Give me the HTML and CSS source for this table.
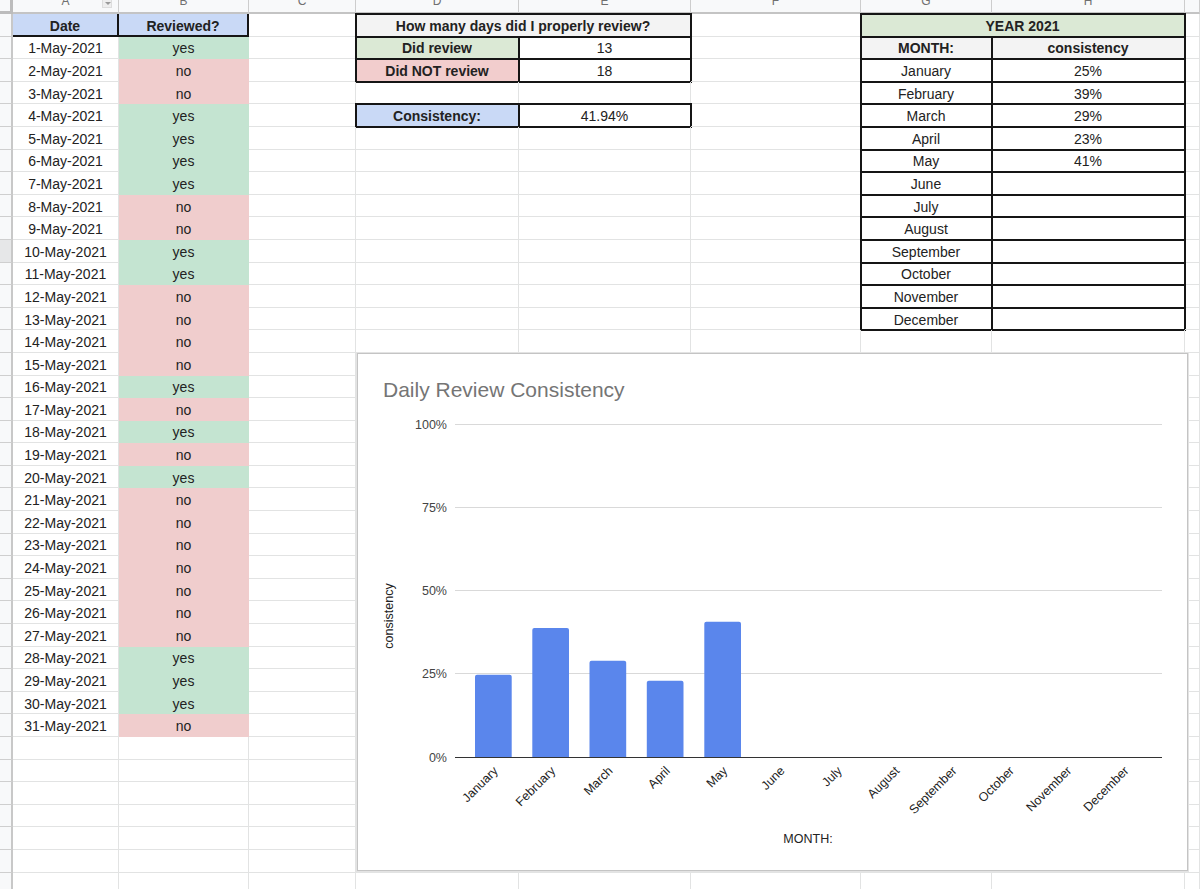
FILE: index.html
```html
<!DOCTYPE html>
<html lang="en">
<head>
<meta charset="utf-8">
<title>Daily Review Consistency</title>
<link rel="stylesheet" href="styles.css">
</head>
<body>
<div class="page">
  <div class="sheet">
    <!-- column headers -->
    <div class="corner"></div>
    <div class="ch has-filter"><span>A</span><i class="filter"></i></div>
    <div class="ch"><span>B</span></div>
    <div class="ch"><span>C</span></div>
    <div class="ch"><span>D</span></div>
    <div class="ch"><span>E</span></div>
    <div class="ch"><span>F</span></div>
    <div class="ch"><span>G</span></div>
    <div class="ch"><span>H</span></div>
    <div class="ch"></div>

    <!-- row 1 -->
    <div class="rh"></div><div class="hd">Date</div><div class="hd">Reviewed?</div><div></div>
    <div class="bx b gr sp2">How many days did I properly review?</div><div></div>
    <div class="bx b lg sp2">YEAR 2021</div><div></div>
    <!-- row 2 -->
    <div class="rh"></div><div>1-May-2021</div><div class="y">yes</div><div></div>
    <div class="bx b lg">Did review</div><div class="bx">13</div><div></div>
    <div class="bx b gr">MONTH:</div><div class="bx b gr">consistency</div><div></div>
    <!-- row 3 -->
    <div class="rh"></div><div>2-May-2021</div><div class="n">no</div><div></div>
    <div class="bx b pk">Did NOT review</div><div class="bx">18</div><div></div>
    <div class="bx">January</div><div class="bx">25%</div><div></div>
    <!-- row 4 -->
    <div class="rh"></div><div>3-May-2021</div><div class="n">no</div><div></div>
    <div></div><div></div><div></div>
    <div class="bx">February</div><div class="bx">39%</div><div></div>
    <!-- row 5 -->
    <div class="rh"></div><div>4-May-2021</div><div class="y">yes</div><div></div>
    <div class="bx b bl">Consistency:</div><div class="bx">41.94%</div><div></div>
    <div class="bx">March</div><div class="bx">29%</div><div></div>
    <!-- row 6 -->
    <div class="rh"></div><div>5-May-2021</div><div class="y">yes</div><div></div><div></div><div></div><div></div>
    <div class="bx">April</div><div class="bx">23%</div><div></div>
    <!-- row 7 -->
    <div class="rh"></div><div>6-May-2021</div><div class="y">yes</div><div></div><div></div><div></div><div></div>
    <div class="bx">May</div><div class="bx">41%</div><div></div>
    <!-- row 8 -->
    <div class="rh"></div><div>7-May-2021</div><div class="y">yes</div><div></div><div></div><div></div><div></div>
    <div class="bx">June</div><div class="bx"></div><div></div>
    <!-- row 9 -->
    <div class="rh"></div><div>8-May-2021</div><div class="n">no</div><div></div><div></div><div></div><div></div>
    <div class="bx">July</div><div class="bx"></div><div></div>
    <!-- row 10 -->
    <div class="rh"></div><div>9-May-2021</div><div class="n">no</div><div></div><div></div><div></div><div></div>
    <div class="bx">August</div><div class="bx"></div><div></div>
    <!-- row 11 -->
    <div class="rh sel"></div><div>10-May-2021</div><div class="y">yes</div><div></div><div></div><div></div><div></div>
    <div class="bx">September</div><div class="bx"></div><div></div>
    <!-- row 12 -->
    <div class="rh"></div><div>11-May-2021</div><div class="y">yes</div><div></div><div></div><div></div><div></div>
    <div class="bx">October</div><div class="bx"></div><div></div>
    <!-- row 13 -->
    <div class="rh"></div><div>12-May-2021</div><div class="n">no</div><div></div><div></div><div></div><div></div>
    <div class="bx">November</div><div class="bx"></div><div></div>
    <!-- row 14 -->
    <div class="rh"></div><div>13-May-2021</div><div class="n">no</div><div></div><div></div><div></div><div></div>
    <div class="bx">December</div><div class="bx"></div><div></div>
    <!-- rows 15-32 -->
    <div class="rh"></div><div>14-May-2021</div><div class="n">no</div><div></div><div></div><div></div><div></div><div></div><div></div><div></div>
    <div class="rh"></div><div>15-May-2021</div><div class="n">no</div><div></div><div></div><div></div><div></div><div></div><div></div><div></div>
    <div class="rh"></div><div>16-May-2021</div><div class="y">yes</div><div></div><div></div><div></div><div></div><div></div><div></div><div></div>
    <div class="rh"></div><div>17-May-2021</div><div class="n">no</div><div></div><div></div><div></div><div></div><div></div><div></div><div></div>
    <div class="rh"></div><div>18-May-2021</div><div class="y">yes</div><div></div><div></div><div></div><div></div><div></div><div></div><div></div>
    <div class="rh"></div><div>19-May-2021</div><div class="n">no</div><div></div><div></div><div></div><div></div><div></div><div></div><div></div>
    <div class="rh"></div><div>20-May-2021</div><div class="y">yes</div><div></div><div></div><div></div><div></div><div></div><div></div><div></div>
    <div class="rh"></div><div>21-May-2021</div><div class="n">no</div><div></div><div></div><div></div><div></div><div></div><div></div><div></div>
    <div class="rh"></div><div>22-May-2021</div><div class="n">no</div><div></div><div></div><div></div><div></div><div></div><div></div><div></div>
    <div class="rh"></div><div>23-May-2021</div><div class="n">no</div><div></div><div></div><div></div><div></div><div></div><div></div><div></div>
    <div class="rh"></div><div>24-May-2021</div><div class="n">no</div><div></div><div></div><div></div><div></div><div></div><div></div><div></div>
    <div class="rh"></div><div>25-May-2021</div><div class="n">no</div><div></div><div></div><div></div><div></div><div></div><div></div><div></div>
    <div class="rh"></div><div>26-May-2021</div><div class="n">no</div><div></div><div></div><div></div><div></div><div></div><div></div><div></div>
    <div class="rh"></div><div>27-May-2021</div><div class="n">no</div><div></div><div></div><div></div><div></div><div></div><div></div><div></div>
    <div class="rh"></div><div>28-May-2021</div><div class="y">yes</div><div></div><div></div><div></div><div></div><div></div><div></div><div></div>
    <div class="rh"></div><div>29-May-2021</div><div class="y">yes</div><div></div><div></div><div></div><div></div><div></div><div></div><div></div>
    <div class="rh"></div><div>30-May-2021</div><div class="y">yes</div><div></div><div></div><div></div><div></div><div></div><div></div><div></div>
    <div class="rh"></div><div>31-May-2021</div><div class="n">no</div><div></div><div></div><div></div><div></div><div></div><div></div><div></div>
    <!-- rows 33-39 -->
    <div class="rh"></div><div></div><div></div><div></div><div></div><div></div><div></div><div></div><div></div><div></div>
    <div class="rh"></div><div></div><div></div><div></div><div></div><div></div><div></div><div></div><div></div><div></div>
    <div class="rh"></div><div></div><div></div><div></div><div></div><div></div><div></div><div></div><div></div><div></div>
    <div class="rh"></div><div></div><div></div><div></div><div></div><div></div><div></div><div></div><div></div><div></div>
    <div class="rh"></div><div></div><div></div><div></div><div></div><div></div><div></div><div></div><div></div><div></div>
    <div class="rh"></div><div></div><div></div><div></div><div></div><div></div><div></div><div></div><div></div><div></div>
    <div class="rh"></div><div></div><div></div><div></div><div></div><div></div><div></div><div></div><div></div><div></div>
  </div>

  <div class="chart">
    <svg class="chart-svg" width="829" height="516" viewBox="0 0 829 516" xmlns="http://www.w3.org/2000/svg">
      <text class="title" x="25" y="42.5">Daily Review Consistency</text>

      <g class="grid">
        <line x1="97" y1="70.5" x2="804" y2="70.5"/>
        <line x1="97" y1="153.5" x2="804" y2="153.5"/>
        <line x1="97" y1="236.5" x2="804" y2="236.5"/>
        <line x1="97" y1="319.5" x2="804" y2="319.5"/>
      </g>

      <g class="ylab">
        <text x="89" y="75">100%</text>
        <text x="89" y="158">75%</text>
        <text x="89" y="241">50%</text>
        <text x="89" y="324">25%</text>
        <text x="89" y="407.5">0%</text>
      </g>

      <text class="axis-title" x="35" y="262" transform="rotate(-90 35 262)">consistency</text>

      <g class="bars">
        <path d="M117 403 V322.7 Q117 320.7 119 320.7 H151.7 Q153.7 320.7 153.7 322.7 V403 Z"/>
        <path d="M174.3 403 V276 Q174.3 274 176.3 274 H209 Q211 274 211 276 V403 Z"/>
        <path d="M231.5 403 V308.7 Q231.5 306.7 233.5 306.7 H266.2 Q268.2 306.7 268.2 308.7 V403 Z"/>
        <path d="M288.8 403 V328.7 Q288.8 326.7 290.8 326.7 H323.5 Q325.5 326.7 325.5 328.7 V403 Z"/>
        <path d="M346.3 403 V269.7 Q346.3 267.7 348.3 267.7 H381 Q383 267.7 383 269.7 V403 Z"/>
      </g>

      <line class="base" x1="97" y1="403.5" x2="804" y2="403.5"/>

      <g class="xlab">
        <text x="140.8" y="417.5" transform="rotate(-45 140.8 417.5)">January</text>
        <text x="198.1" y="417.5" transform="rotate(-45 198.1 417.5)">February</text>
        <text x="255.5" y="417.5" transform="rotate(-45 255.5 417.5)">March</text>
        <text x="312.8" y="417.5" transform="rotate(-45 312.8 417.5)">April</text>
        <text x="370.1" y="417.5" transform="rotate(-45 370.1 417.5)">May</text>
        <text x="427.4" y="417.5" transform="rotate(-45 427.4 417.5)">June</text>
        <text x="484.8" y="417.5" transform="rotate(-45 484.8 417.5)">July</text>
        <text x="542.1" y="417.5" transform="rotate(-45 542.1 417.5)">August</text>
        <text x="599.4" y="417.5" transform="rotate(-45 599.4 417.5)">September</text>
        <text x="656.8" y="417.5" transform="rotate(-45 656.8 417.5)">October</text>
        <text x="714.1" y="417.5" transform="rotate(-45 714.1 417.5)">November</text>
        <text x="771.4" y="417.5" transform="rotate(-45 771.4 417.5)">December</text>
      </g>

      <text class="axis-title mid" x="450" y="489">MONTH:</text>
    </svg>
  </div>
</div>
</body>
</html>
```

FILE: styles.css
```css
html, body {
  margin: 0;
  padding: 0;
  background: #ffffff;
}

body {
  overflow: hidden;
  font-family: "Liberation Sans", Arial, sans-serif;
}

.page {
  position: relative;
  width: 1200px;
  height: 889px;
  overflow: hidden;
}

/* ---------- spreadsheet grid ---------- */
.sheet {
  display: grid;
  grid-template-columns: 13px 106px 130px 107px 163px 172px 170px 131px 193px 15px;
  grid-template-rows: 14px;
  grid-auto-rows: 22.6px;
  font-size: 14px;
  color: #222222;
}

.sheet > div {
  box-sizing: border-box;
  border-right: 1px solid #e2e3e3;
  border-bottom: 1px solid #e2e3e3;
  padding-top: 2px;
  display: flex;
  align-items: center;
  justify-content: center;
  white-space: nowrap;
  min-width: 0;
}

/* header row / header column */
.sheet > .corner {
  background: #f8f9fa;
  border-right: 3px solid #bcbcbc;
  border-bottom: 3px solid #bcbcbc;
  padding-top: 0;
}

.sheet > .ch {
  background: #f8f9fa;
  border-right: 1px solid #cdcdcd;
  border-bottom: 2px solid #c4c4c4;
  padding-top: 0;
  align-items: flex-start;
  color: #707070;
  font-size: 12px;
}

.ch span {
  display: block;
  line-height: 12px;
  margin-top: -5px;
}

.has-filter {
  position: relative;
}

.filter {
  position: absolute;
  right: 6px;
  top: 0;
  width: 10px;
  height: 8px;
  background: #eeeeee;
  border: 1px solid #dddddd;
  border-top: 0;
  box-sizing: border-box;
}

.filter::after {
  content: "";
  position: absolute;
  left: 1.5px;
  top: 1.5px;
  border-left: 3px solid transparent;
  border-right: 3px solid transparent;
  border-top: 3.5px solid #9a9a9a;
}

.sheet > .rh {
  background: #f8f9fa;
  border-right: 2px solid #c8c8c8;
  border-bottom: 1px solid #cfcfcf;
  padding-top: 0;
}

.sheet > .rh.sel {
  background: #e6e7e8;
}

/* data column header */
.sheet > .hd {
  background: #c9d9f6;
  font-weight: bold;
  border-right: 2px solid #151515;
  border-bottom: 2px solid #151515;
  padding-top: 4px;
}

/* conditional yes / no */
.sheet > .y {
  background: #c4e4d1;
  border-color: #c4e4d1;
}

.sheet > .n {
  background: #f0cdcd;
  border-color: #f0cdcd;
}

/* boxed summary cells */
.sheet > .bx {
  outline: 2px solid #151515;
  outline-offset: -1px;
}

.b { font-weight: bold; }
.sheet > .gr { background: #f3f3f3; }
.sheet > .lg { background: #dbe9d5; }
.sheet > .pk { background: #f2cdcd; }
.sheet > .bl { background: #c9d9f6; }
.sp2 { grid-column: span 2; }

/* ---------- chart overlay ---------- */
.chart {
  position: absolute;
  left: 357px;
  top: 353px;
  width: 831px;
  height: 518px;
  box-sizing: border-box;
  border: 1px solid #c4c4c4;
  box-shadow: 0 0 0 1px #e3e3e3;
  background: #ffffff;
}

.chart-svg {
  display: block;
  font-family: "Liberation Sans", Arial, sans-serif;
}

.title {
  font-size: 21px;
  fill: #757575;
}

.grid line {
  stroke: #d9d9d9;
  stroke-width: 1;
}

.base {
  stroke: #333333;
  stroke-width: 1;
}

.ylab text {
  font-size: 12.5px;
  fill: #444444;
  text-anchor: end;
}

.bars path {
  fill: #5a86ec;
}

.xlab text {
  font-size: 12.5px;
  fill: #222222;
  text-anchor: end;
}

.axis-title {
  font-size: 12.5px;
  fill: #222222;
  text-anchor: middle;
}
```
